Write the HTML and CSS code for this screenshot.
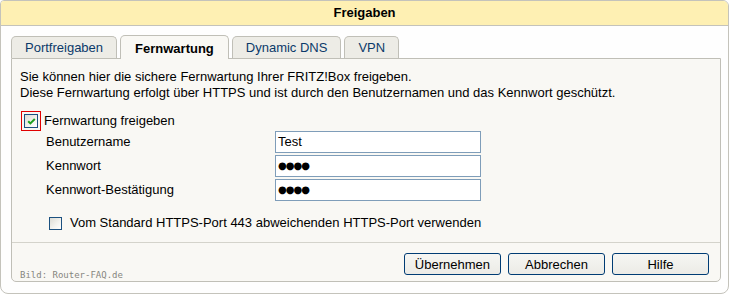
FILE: index.html
```html
<!DOCTYPE html>
<html lang="de">
<head>
<meta charset="utf-8">
<title>Freigaben</title>
<link rel="stylesheet" href="styles.css">
</head>
<body>
<div class="window">
  <div class="window-title">Freigaben</div>
  <div class="window-body">
    <div class="tabs">
      <div class="tab">Portfreigaben</div>
      <div class="tab tab-active">Fernwartung</div>
      <div class="tab">Dynamic DNS</div>
      <div class="tab">VPN</div>
    </div>
    <div class="panel">
      <div class="panel-body">
        <p class="intro">Sie können hier die sichere Fernwartung Ihrer FRITZ!Box freigeben.<br>Diese Fernwartung erfolgt über HTTPS und ist durch den Benutzernamen und das Kennwort geschützt.</p>
        <div class="check-row">
          <span class="focus-ring"><span class="checkbox"><svg class="check" width="11" height="11" viewBox="0 0 11 11"><path d="M2.2 5.2 L4.4 7.4 L8.8 3" fill="none" stroke="#21a121" stroke-width="2"/></svg></span></span>
          <span class="check-label">Fernwartung freigeben</span>
        </div>
        <div class="form-row">
          <span class="form-label">Benutzername</span>
          <span class="field">Test</span>
        </div>
        <div class="form-row">
          <span class="form-label">Kennwort</span>
          <span class="field field-secret">●●●●</span>
        </div>
        <div class="form-row">
          <span class="form-label">Kennwort-Bestätigung</span>
          <span class="field field-secret">●●●●</span>
        </div>
        <div class="check-row check-row-port">
          <span class="checkbox"></span>
          <span class="check-label-port">Vom Standard HTTPS-Port 443 abweichenden HTTPS-Port verwenden</span>
        </div>
      </div>
      <div class="panel-footer">
        <span class="credit">Bild: Router-FAQ.de</span>
        <div class="buttons">
          <button class="btn">Übernehmen</button>
          <button class="btn">Abbrechen</button>
          <button class="btn">Hilfe</button>
        </div>
      </div>
    </div>
  </div>
</div>
</body>
</html>
```

FILE: styles.css
```css
* {
  box-sizing: border-box;
}

body {
  margin: 0;
  background: #ffffff;
  font-family: "Liberation Sans", Arial, sans-serif;
  font-size: 13px;
  line-height: 16px;
  color: #000000;
}

.window {
  width: 729px;
  height: 294px;
  border: 1px solid #c4c3bb;
  border-radius: 4px 6px 8px 8px;
  background: #fefefe;
  overflow: hidden;
}

.window-title {
  height: 25px;
  line-height: 24px;
  background: #fef0b3;
  border-bottom: 1px solid #c4c3bb;
  text-align: center;
  font-weight: bold;
}

.window-body {
  padding: 9px 7px 9px 10px;
}

.tabs {
  display: flex;
  align-items: flex-end;
  gap: 3px;
}

.tab {
  height: 22px;
  padding: 1px 13px 0;
  border: 1px solid #c0bfb7;
  border-bottom: none;
  border-radius: 5px 5px 0 0;
  background: #edece6;
  color: #0b3a6a;
  line-height: 19px;
  white-space: nowrap;
}

.tab-active {
  position: relative;
  z-index: 1;
  height: 24px;
  margin-bottom: -1px;
  padding: 3px 14px 0;
  background: #f9f8f4;
  color: #000000;
  font-weight: bold;
}

.panel {
  border: 1px solid #c0bfb7;
  border-radius: 0 0 5px 5px;
  background: #f9f8f4;
}

.panel-body {
  padding: 10px 8px 11px;
}

.intro {
  margin: 0 0 10px;
}

.check-row {
  display: flex;
  align-items: center;
  height: 20px;
}

.focus-ring {
  display: flex;
  margin-left: 1px;
  padding: 2px 2px;
  border: 1px solid #e00000;
}

.checkbox {
  display: flex;
  align-items: center;
  justify-content: center;
  width: 14px;
  height: 14px;
  border: 1px solid #1c5180;
  background: linear-gradient(135deg, #dcdcd5 0%, #f4f4f0 60%, #ffffff 100%);
}

.check {
  display: block;
}

.check-label {
  margin-left: 3px;
}

.form-row {
  display: flex;
  align-items: center;
  height: 22px;
  margin-bottom: 2px;
}

.form-label {
  width: 229px;
  margin-left: 26px;
}

.field {
  display: flex;
  align-items: center;
  width: 206px;
  height: 22px;
  padding-left: 2px;
  border: 1px solid #7f9db9;
  background: #ffffff;
}

.field-secret {
  padding-left: 2px;
  font-family: "DejaVu Sans", sans-serif;
  font-size: 10px;
  letter-spacing: -1px;
}

.check-row-port {
  height: 16px;
  margin-top: 14px;
}

.check-row-port .checkbox {
  width: 13px;
  height: 13px;
  margin-left: 29px;
}

.check-label-port {
  margin-left: 8px;
}

.panel-footer {
  display: flex;
  justify-content: space-between;
  align-items: flex-start;
  height: 39px;
  padding: 10px 11px 0 8px;
  border-top: 1px solid #d4d3cb;
}

.credit {
  align-self: flex-end;
  font-family: "DejaVu Sans Mono", monospace;
  font-size: 9px;
  line-height: 11px;
  color: #86867f;
}

.buttons {
  display: flex;
  gap: 7px;
}

.btn {
  min-width: 97px;
  height: 22px;
  padding: 0 10px;
  border: 1px solid #003c74;
  border-radius: 3px;
  background: linear-gradient(#f6f6f3, #ecebe6);
  font-family: "Liberation Sans", Arial, sans-serif;
  font-size: 13px;
  color: #000000;
}
```
